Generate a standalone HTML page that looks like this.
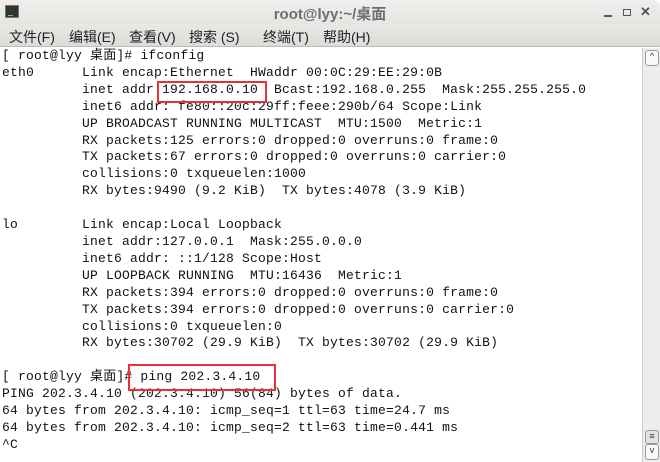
<!DOCTYPE html>
<html><head><meta charset="utf-8"><style>
*{margin:0;padding:0;box-sizing:border-box}
body{width:660px;height:462px;overflow:hidden;background:#fff;font-family:"Liberation Sans","Noto Sans CJK SC",sans-serif;position:relative}
#title{position:absolute;left:0;top:0;width:660px;height:24px;background:linear-gradient(#f0efed,#e6e5e2);border-top-right-radius:6px}
#title .t{position:absolute;left:0;right:0;top:3px;text-align:center;font-size:15px;font-weight:bold;color:#6e6e6e}
#icon{position:absolute;left:5px;top:5px;width:14px;height:13px;background:#333;border:1px solid #777}
#icon:after{content:"";position:absolute;left:2px;top:9px;width:5px;height:1px;background:#6c6}
#menu{position:absolute;left:0;top:24px;width:660px;height:23px;background:linear-gradient(#e9e8e6,#dddcd9);border-bottom:1px solid #bbb;font-size:14px;color:#222}
#menu span{position:absolute;top:3px}
#term{position:absolute;left:2px;top:48px;font-family:"Liberation Mono","Noto Sans CJK SC",monospace;font-size:13px;letter-spacing:0.2px;line-height:16.9px;white-space:pre;color:#111}
#sb{position:absolute;left:642px;top:48px;width:18px;height:414px;background:#eeedeb;border-left:1px solid #ccc}
.btn{position:absolute;left:2px;width:14px;height:16px;border:1px solid #999;border-radius:3px;background:#f8f8f8;font-size:9px;text-align:center;color:#333}
.box{position:absolute;border:2px solid #e8303a}
</style></head><body>
<div id="title"><div id="icon"></div><div class="t">root@lyy:~/桌面</div>
<div style="position:absolute;left:604px;top:15px;width:8px;height:2px;background:#555"></div>
<div style="position:absolute;left:623px;top:9px;width:8px;height:7px;border:1.5px solid #555"></div>
<div style="position:absolute;left:640px;top:4px;font-size:13px;color:#555;font-weight:bold">✕</div>
</div>
<div id="menu"><span style="left:9px">文件(F)</span><span style="left:69px">编辑(E)</span><span style="left:129px">查看(V)</span><span style="left:189px">搜索 (S)</span><span style="left:263px">终端(T)</span><span style="left:323px">帮助(H)</span></div>
<div id="term">[ root@lyy 桌面]# ifconfig
eth0      Link encap:Ethernet  HWaddr 00:0C:29:EE:29:0B
          inet addr:192.168.0.10  Bcast:192.168.0.255  Mask:255.255.255.0
          inet6 addr: fe80::20c:29ff:feee:290b/64 Scope:Link
          UP BROADCAST RUNNING MULTICAST  MTU:1500  Metric:1
          RX packets:125 errors:0 dropped:0 overruns:0 frame:0
          TX packets:67 errors:0 dropped:0 overruns:0 carrier:0
          collisions:0 txqueuelen:1000
          RX bytes:9490 (9.2 KiB)  TX bytes:4078 (3.9 KiB)

lo        Link encap:Local Loopback
          inet addr:127.0.0.1  Mask:255.0.0.0
          inet6 addr: ::1/128 Scope:Host
          UP LOOPBACK RUNNING  MTU:16436  Metric:1
          RX packets:394 errors:0 dropped:0 overruns:0 frame:0
          TX packets:394 errors:0 dropped:0 overruns:0 carrier:0
          collisions:0 txqueuelen:0
          RX bytes:30702 (29.9 KiB)  TX bytes:30702 (29.9 KiB)

[ root@lyy 桌面]# ping 202.3.4.10
PING 202.3.4.10 (202.3.4.10) 56(84) bytes of data.
64 bytes from 202.3.4.10: icmp_seq=1 ttl=63 time=24.7 ms
64 bytes from 202.3.4.10: icmp_seq=2 ttl=63 time=0.441 ms
^C</div>
<div id="sb"><div class="btn" style="top:2px">^</div><div class="btn" style="top:382px;height:14px;background:#e4e3e0">≡</div><div class="btn" style="top:396px">v</div></div>
<div class="box" style="left:157px;top:81px;width:110px;height:22px"></div>
<div class="box" style="left:128px;top:364px;width:148px;height:27px"></div>
</body></html>
